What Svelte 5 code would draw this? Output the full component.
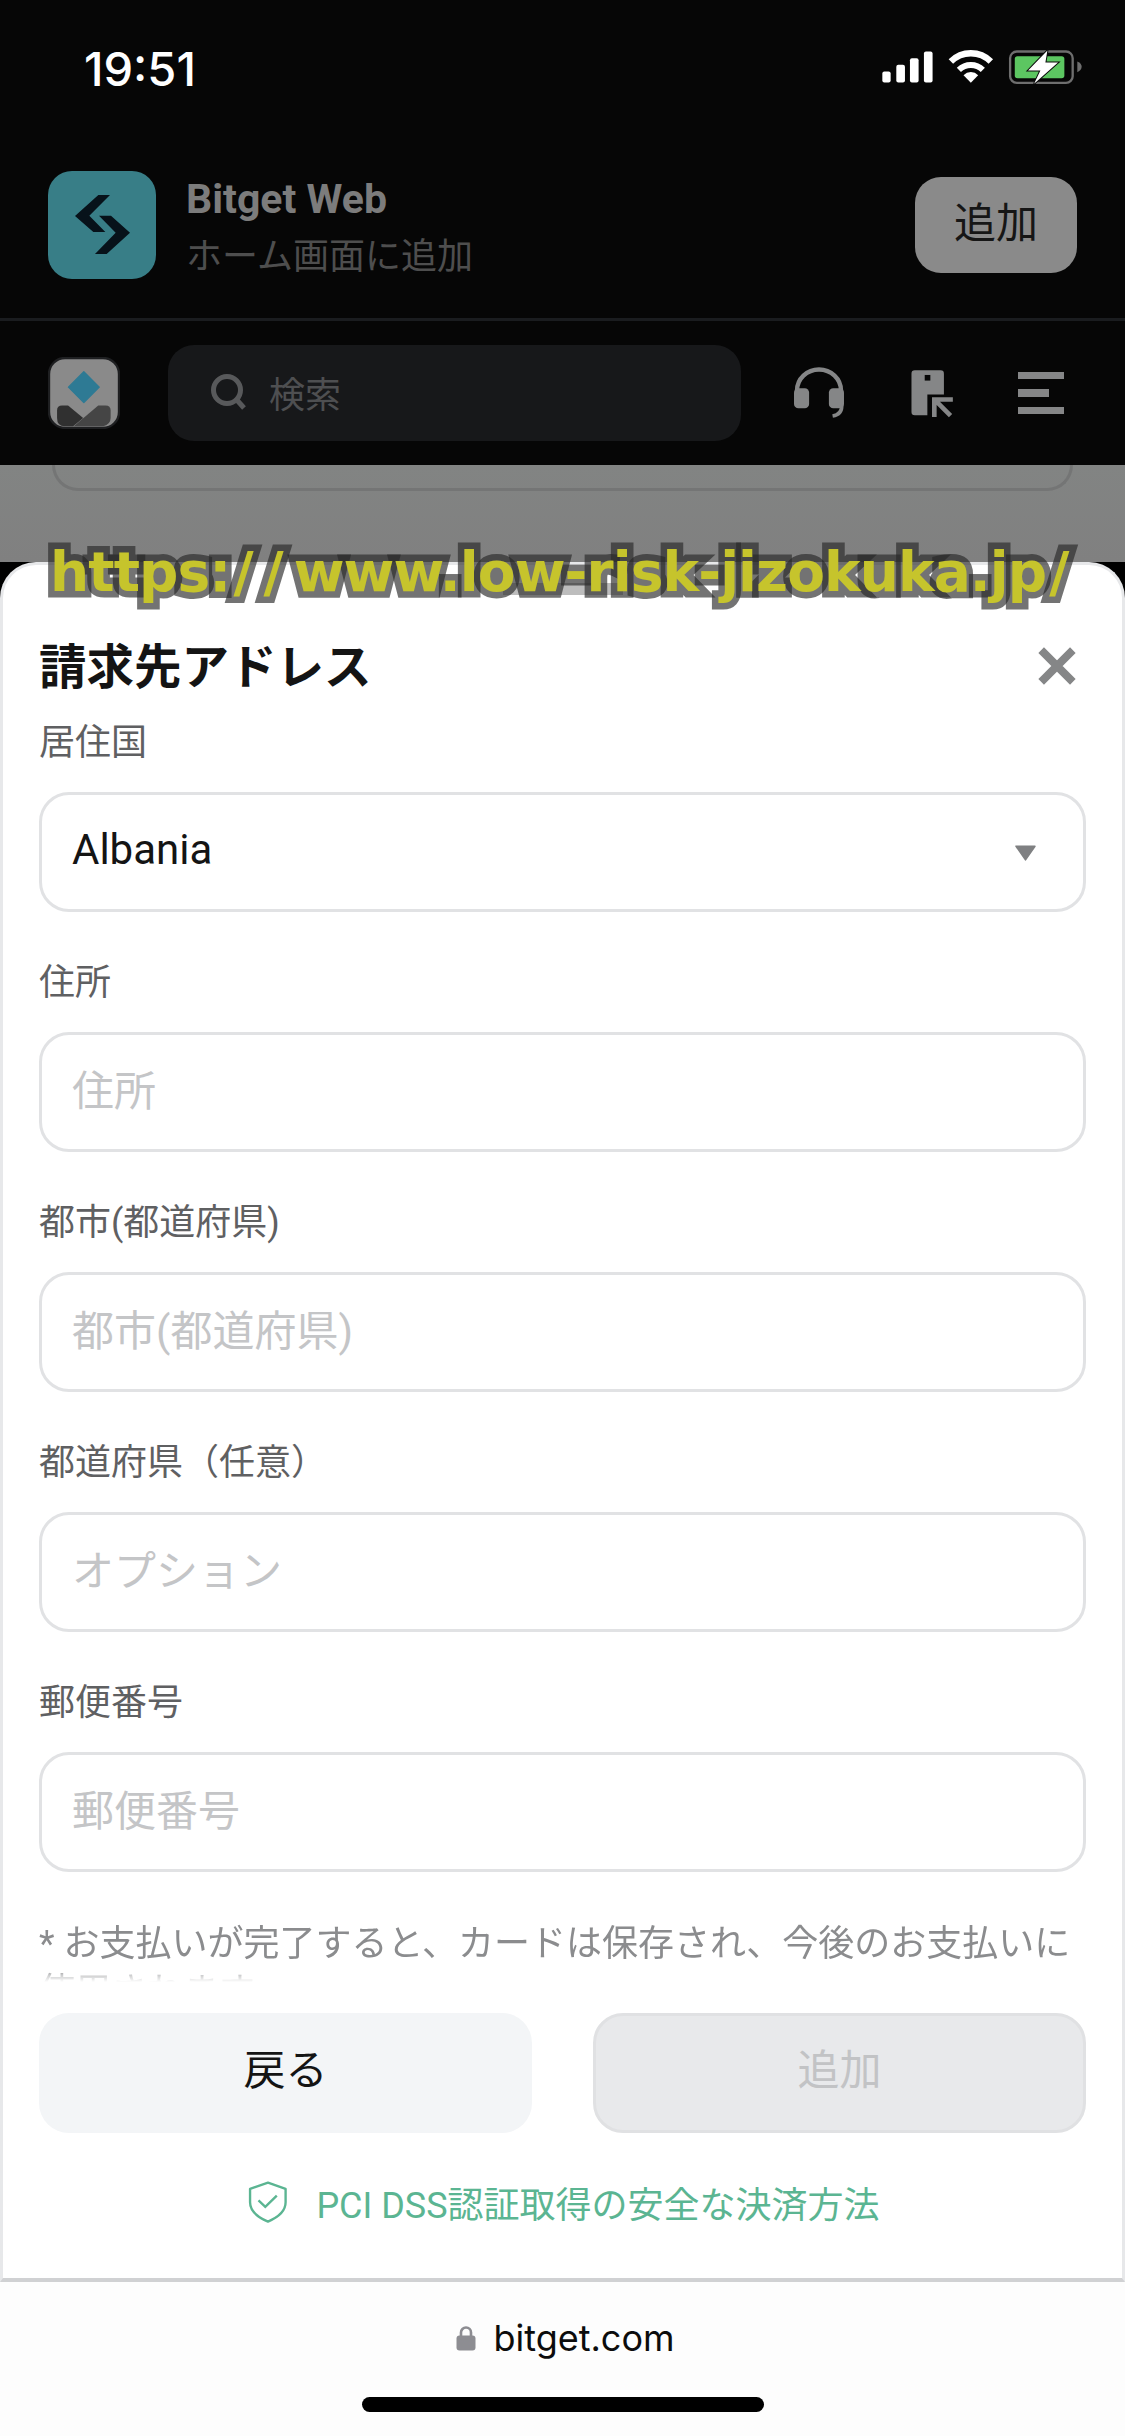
<script>
  const fields = [
    { label: '住所', placeholder: '住所' },
    { label: '都市(都道府県)', placeholder: '都市(都道府県)' },
    { label: '都道府県（任意）', placeholder: 'オプション' },
    { label: '郵便番号', placeholder: '郵便番号' }
  ];
</script>

<div class="page">
  <header class="top">
    <div class="status">
      <span class="time">19:51</span>
      <svg class="status-icons" viewBox="90 90 610 110" width="203" height="37">
        <rect x="97" y="160" width="25" height="33" rx="6" fill="#fff"/>
        <rect x="139" y="140" width="26" height="53" rx="6" fill="#fff"/>
        <rect x="180" y="120" width="26" height="73" rx="6" fill="#fff"/>
        <rect x="222" y="100" width="26" height="93" rx="6" fill="#fff"/>
        <path d="M303 130A85 85 0 0 1 423 130" fill="none" stroke="#fff" stroke-width="19"/>
        <path d="M327 155A52 52 0 0 1 399 155" fill="none" stroke="#fff" stroke-width="18"/>
        <path d="M363 194L341 171A31 31 0 0 1 385 171Z" fill="#fff"/>
        <rect x="481" y="100" width="188" height="94" rx="20" fill="none" stroke="#6e6e6e" stroke-width="7"/>
        <rect x="495" y="114" width="149" height="66" rx="8" fill="#5cc661"/>
        <path d="M683 130C692 133 696 140 696 146C696 152 692 159 683 162Z" fill="#6e6e6e"/>
        <path d="M593 97L535 157H572L553 197L625 133H587Z" fill="#fff" stroke="#0a0a0a" stroke-width="6" paint-order="stroke"/>
      </svg>
    </div>

    <div class="banner">
      <svg class="app-icon" viewBox="54 63 324 324" width="108" height="108">
        <rect x="54" y="63" width="324" height="324" rx="72" fill="#387e87"/>
        <path d="M205 135H240L178 197L226 246H190L135 198Z" fill="#07121a"/>
        <path d="M207 197H243L300 248L230 312H195L257 248Z" fill="#07121a"/>
      </svg>
      <div class="banner-text">
        <div class="banner-name">Bitget Web</div>
        <div class="banner-sub">ホーム画面に追加</div>
      </div>
      <div class="banner-btn">追加</div>
    </div>

    <nav class="nav">
      <svg class="avatar" viewBox="145 80 215 215" width="72" height="72">
        <rect x="148" y="83" width="209" height="209" rx="48" fill="#8a8a8a" stroke="#1e1f21" stroke-width="7"/>
        <path d="M252 124L298 170L252 216L206 170Z" fill="#2e7a94" stroke="#2e7a94" stroke-width="4" stroke-linejoin="round"/>
        <path d="M172 240Q172 225 187 225H205L250 262L220 287H195Q172 287 172 262Z" fill="#303030"/>
        <path d="M332 240Q332 225 317 225H295L222 287H310Q332 280 332 262Z" fill="#454545"/>
      </svg>
      <div class="search">
        <svg viewBox="0 0 38 38" width="38" height="38">
          <circle cx="17" cy="17" r="13.5" fill="none" stroke="#58595b" stroke-width="5"/>
          <path d="M26 26L34 35" stroke="#58595b" stroke-width="5"/>
        </svg>
        <span>検索</span>
      </div>
      <div class="nav-icons">
        <svg viewBox="100 90 155 155" width="52" height="52">
          <path d="M112 165V160A65 62 0 0 1 243 160V165" fill="none" stroke="#858687" stroke-width="13"/>
          <rect x="103" y="153" width="45" height="60" rx="13" fill="#858687"/>
          <rect x="207" y="153" width="45" height="60" rx="13" fill="#858687"/>
          <path d="M245 205C246 225 235 233 218 236" fill="none" stroke="#858687" stroke-width="11"/>
        </svg>
        <svg viewBox="448 88 132 148" width="44" height="49">
          <path d="M462 92H540A10 10 0 0 1 550 102V165H500V228H462A10 10 0 0 1 452 218V102A10 10 0 0 1 462 92Z" fill="#858687"/>
          <rect x="492" y="106" width="17" height="17" fill="#070707"/>
          <path d="M521 233V180H577M524 183L570 229" fill="none" stroke="#858687" stroke-width="14"/>
        </svg>
        <div class="burger"><i></i><i class="short"></i><i></i></div>
      </div>
    </nav>
  </header>

  <div class="backdrop">
    <div class="ghost"></div>
  </div>

  <section class="sheet">
    <div class="handle"></div>
    <div class="title-row">
      <h1>請求先アドレス</h1>
      <svg viewBox="0 0 36 36" width="38" height="38">
        <path d="M3 3L33 33M33 3L3 33" stroke="#858687" stroke-width="7.5" fill="none"/>
      </svg>
    </div>

    <div class="field">
      <div class="label">居住国</div>
      <div class="box">
        <span class="value">Albania</span>
        <svg viewBox="0 0 20 16" width="21" height="17"><path d="M1 2H19L10 15Z" fill="#7f8082" stroke="#7f8082" stroke-linejoin="round" stroke-width="1.5"/></svg>
      </div>
    </div>

    {#each fields as f}
      <div class="field">
        <div class="label">{f.label}</div>
        <div class="box"><span class="ph">{f.placeholder}</span></div>
      </div>
    {/each}

    <div class="note">* お支払いが完了すると、カードは保存され、今後のお支払いに使用されます</div>

    <div class="actions">
      <div class="btn back">戻る</div>
      <div class="btn add">追加</div>
    </div>

    <div class="pci">
      <svg viewBox="55 40 118 130" width="40" height="44">
        <path d="M114 48L166 66V106C166 135 140 152 114 163C88 152 61 135 61 106V66Z" fill="none" stroke="#5bb592" stroke-width="7" stroke-linejoin="round"/>
        <path d="M86 100L106 119L140 86" fill="none" stroke="#5bb592" stroke-width="7"/>
      </svg>
      <span>PCI DSS認証取得の安全な決済方法</span>
    </div>
  </section>

  <footer class="browser">
    <div class="url">
      <svg viewBox="0 0 20 26" width="20" height="26">
        <path d="M5 12V7.5A5 5 0 0 1 15 7.5V12" fill="none" stroke="#8d8d92" stroke-width="2.6"/>
        <rect x="0.5" y="10.5" width="19" height="15" rx="3" fill="#8d8d92"/>
      </svg>
      <span>bitget.com</span>
    </div>
    <div class="home"></div>
  </footer>

  <div class="watermark">https:<span class="sl">//</span>www.low-risk-jizokuka.jp<span class="sl">/</span></div>
</div>

<style>
  :global(body) {
    margin: 0;
    background: #000;
  }
  .page {
    position: relative;
    width: 1125px;
    height: 2436px;
    overflow: hidden;
    display: flex;
    flex-direction: column;
    font-family: Roboto, "Noto Sans CJK JP", sans-serif;
  }
  .top {
    background: #060606;
    height: 465px;
    flex: none;
    display: flex;
    flex-direction: column;
  }
  .status {
    height: 138px;
    display: flex;
    align-items: flex-start;
    justify-content: space-between;
    padding: 0 42px 0 84px;
    box-sizing: border-box;
  }
  .time {
    font-family: Inter, sans-serif;
    font-size: 47px;
    font-weight: 500;
    color: #fff;
    line-height: 44px;
    margin-top: 47px;
  }
  .status-icons {
    margin-top: 48px;
  }
  .banner {
    height: 183px;
    box-sizing: border-box;
    display: flex;
    align-items: flex-start;
    padding: 33px 48px 0 48px;
    border-bottom: 3px solid #1a1c1f;
  }
  .banner-text {
    margin-left: 30px;
    flex: 1;
    padding-top: 4px;
  }
  .banner-name {
    font-size: 41px;
    font-weight: 700;
    line-height: 48px;
    color: #7c7c7c;
  }
  .banner-sub {
    font-size: 36px;
    line-height: 48px;
    margin-top: 10px;
    color: #4e4e4e;
  }
  .banner-btn {
    width: 162px;
    height: 96px;
    box-sizing: border-box;
    padding-bottom: 12px;
    margin-top: 6px;
    border-radius: 26px;
    background: #8a8a8a;
    color: #161616;
    font-size: 42px;
    display: flex;
    align-items: center;
    justify-content: center;
  }
  .nav {
    flex: 1;
    display: flex;
    align-items: center;
    padding: 0 48px;
  }
  .avatar {
    flex: none;
  }
  .search {
    width: 573px;
    height: 96px;
    margin-left: 48px;
    border-radius: 26px;
    background: #17181a;
    display: flex;
    align-items: center;
    padding: 0 0 3px 42px;
    box-sizing: border-box;
    gap: 21px;
    font-size: 36px;
    color: #4e4f51;
  }
  .nav-icons {
    flex: 1;
    display: flex;
    align-items: center;
    justify-content: space-between;
    margin-left: 52px;
    padding-right: 13px;
  }
  .burger {
    width: 46px;
    display: flex;
    flex-direction: column;
    gap: 10px;
  }
  .burger i {
    display: block;
    height: 7.5px;
    background: #858687;
  }
  .burger .short {
    width: 31px;
  }
  .backdrop {
    height: 97px;
    flex: none;
    background: linear-gradient(#828483, #808080);
    padding: 0 52px;
  }
  .ghost {
    height: 26px;
    box-sizing: border-box;
    border: 3px solid #747575;
    border-top: 0;
    border-radius: 0 0 40px 40px;
  }
  .sheet {
    height: 1720px;
    flex: none;
    background: #fff;
    box-sizing: border-box;
    border: 3px solid #e7e8ea;
    border-bottom: 4px solid #d0d1d3;
    border-radius: 36px 36px 0 0;
    padding: 0 36px;
    display: flex;
    flex-direction: column;
    position: relative;
  }
  .handle {
    width: 120px;
    height: 12px;
    background: #bdbdbd;
    align-self: center;
    margin-top: 18px;
    flex: none;
  }
  .title-row {
    height: 70px;
    margin-top: 36px;
    margin-bottom: 17px;
    display: flex;
    align-items: center;
    justify-content: space-between;
    flex: none;
  }
  h1 {
    margin: 0;
    font-size: 47.5px;
    font-weight: 700;
    color: #141414;
    position: relative;
    top: -3px;
  }
  .title-row svg {
    margin-right: 10px;
  }
  .field {
    flex: none;
    height: 240px;
  }
  .label {
    height: 50px;
    line-height: 50px;
    font-size: 36px;
    color: #5f6062;
  }
  .box {
    margin-top: 24px;
    height: 120px;
    box-sizing: border-box;
    border: 3px solid #e1e2e4;
    border-radius: 30px;
    padding: 0 47px 0 30px;
    display: flex;
    align-items: center;
    justify-content: space-between;
    font-size: 42px;
  }
  .value {
    font-size: 42px;
    color: #141414;
    padding-bottom: 5px;
  }
  .ph {
    color: #c4c5c7;
    padding-bottom: 9px;
  }
  .note {
    flex: none;
    height: 62px;
    margin-top: 2px;
    overflow: hidden;
    font-size: 36px;
    line-height: 48px;
    color: #8b8c8e;
    -webkit-mask-image: linear-gradient(#000 50px, rgba(0,0,0,.45) 55px, transparent 62px);
    mask-image: linear-gradient(#000 50px, rgba(0,0,0,.45) 55px, transparent 62px);
  }
  .actions {
    flex: none;
    margin-top: 31px;
    display: flex;
    justify-content: space-between;
  }
  .btn {
    width: 493px;
    height: 120px;
    box-sizing: border-box;
    padding-bottom: 13px;
    border-radius: 30px;
    display: flex;
    align-items: center;
    justify-content: center;
    font-size: 42px;
  }
  .back {
    background: #f3f5f7;
    color: #141414;
  }
  .add {
    background: #e8e9eb;
    border: 3px solid #e0e1e3;
    color: #c2c3c5;
  }
  .pci {
    flex: none;
    margin-top: 43px;
    display: flex;
    align-items: center;
    justify-content: center;
    gap: 28px;
    font-size: 36px;
    color: #5bb592;
    padding-left: 3px;
  }
  .browser {
    flex: 1;
    background: #fdfdfd;
    display: flex;
    flex-direction: column;
    align-items: center;
  }
  .url {
    display: flex;
    align-items: center;
    gap: 17px;
    margin-top: 34px;
    padding-left: 6px;
    font-family: Inter, sans-serif;
    font-size: 36px;
    color: #0c0c0c;
    height: 44px;
  }
  .home {
    width: 402px;
    height: 15px;
    border-radius: 8px;
    background: #000;
    margin-top: 37px;
  }
  .watermark {
    position: absolute;
    left: 50px;
    top: 540px;
    font-family: "DejaVu Sans", sans-serif;
    font-weight: 700;
    font-size: 55px;
    letter-spacing: -0.9px;
    line-height: 64px;
    white-space: nowrap;
    color: #c6c42c;
    -webkit-text-stroke: 13px rgba(40, 40, 40, 0.65);
    paint-order: stroke fill;
  }
  .sl {
    letter-spacing: 10px;
    padding-left: 3px;
  }
</style>
